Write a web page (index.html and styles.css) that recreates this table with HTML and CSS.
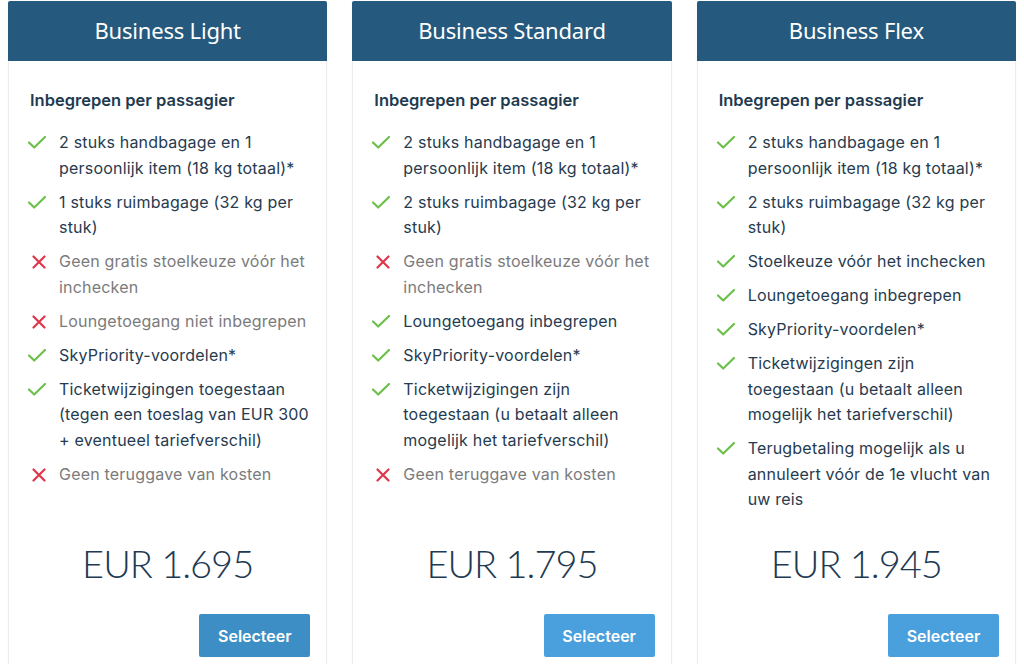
FILE: index.html
```html
<!DOCTYPE html>
<html lang="nl">
<head>
<meta charset="utf-8">
<title>Business tarieven</title>
<link rel="stylesheet" href="styles.css">
</head>
<body>
<svg width="0" height="0" class="defs" aria-hidden="true">
  <defs>
    <symbol id="ok" viewBox="0 0 18 13"><path d="M1 6.5 L6.2 11.5 L17 1" fill="none" stroke="currentColor" stroke-width="2.2" stroke-linecap="round" stroke-linejoin="round"/></symbol>
    <symbol id="no" viewBox="0 0 14 14"><path d="M1.5 1.5 L12.5 12.5 M12.5 1.5 L1.5 12.5" fill="none" stroke="currentColor" stroke-width="2.2" stroke-linecap="round"/></symbol>
  </defs>
</svg>
<main class="plans">
  <section class="card">
    <h2 class="card-title">Business Light</h2>
    <div class="card-body">
      <h3 class="incl">Inbegrepen per passagier</h3>
      <ul class="features">
        <li class="yes"><svg class="ico"><use href="#ok"/></svg><span>2 stuks handbagage en 1 persoonlijk item (18 kg totaal)*</span></li>
        <li class="yes"><svg class="ico"><use href="#ok"/></svg><span>1 stuks ruimbagage (32 kg per stuk)</span></li>
        <li class="no"><svg class="ico x"><use href="#no"/></svg><span>Geen gratis stoelkeuze vóór het inchecken</span></li>
        <li class="no"><svg class="ico x"><use href="#no"/></svg><span>Loungetoegang niet inbegrepen</span></li>
        <li class="yes"><svg class="ico"><use href="#ok"/></svg><span>SkyPriority-voordelen*</span></li>
        <li class="yes"><svg class="ico"><use href="#ok"/></svg><span>Ticketwijzigingen toegestaan (tegen een toeslag van EUR 300 + eventueel tariefverschil)</span></li>
        <li class="no"><svg class="ico x"><use href="#no"/></svg><span>Geen teruggave van kosten</span></li>
      </ul>
      <p class="price">EUR 1.695</p>
      <div class="actions"><button class="select dark">Selecteer</button></div>
    </div>
  </section>
  <section class="card">
    <h2 class="card-title">Business Standard</h2>
    <div class="card-body">
      <h3 class="incl">Inbegrepen per passagier</h3>
      <ul class="features">
        <li class="yes"><svg class="ico"><use href="#ok"/></svg><span>2 stuks handbagage en 1 persoonlijk item (18 kg totaal)*</span></li>
        <li class="yes"><svg class="ico"><use href="#ok"/></svg><span>2 stuks ruimbagage (32 kg per stuk)</span></li>
        <li class="no"><svg class="ico x"><use href="#no"/></svg><span>Geen gratis stoelkeuze vóór het inchecken</span></li>
        <li class="yes"><svg class="ico"><use href="#ok"/></svg><span>Loungetoegang inbegrepen</span></li>
        <li class="yes"><svg class="ico"><use href="#ok"/></svg><span>SkyPriority-voordelen*</span></li>
        <li class="yes"><svg class="ico"><use href="#ok"/></svg><span>Ticketwijzigingen zijn toegestaan (u betaalt alleen mogelijk het tariefverschil)</span></li>
        <li class="no"><svg class="ico x"><use href="#no"/></svg><span>Geen teruggave van kosten</span></li>
      </ul>
      <p class="price">EUR 1.795</p>
      <div class="actions"><button class="select">Selecteer</button></div>
    </div>
  </section>
  <section class="card">
    <h2 class="card-title">Business Flex</h2>
    <div class="card-body">
      <h3 class="incl">Inbegrepen per passagier</h3>
      <ul class="features">
        <li class="yes"><svg class="ico"><use href="#ok"/></svg><span>2 stuks handbagage en 1 persoonlijk item (18 kg totaal)*</span></li>
        <li class="yes"><svg class="ico"><use href="#ok"/></svg><span>2 stuks ruimbagage (32 kg per stuk)</span></li>
        <li class="yes"><svg class="ico"><use href="#ok"/></svg><span>Stoelkeuze vóór het inchecken</span></li>
        <li class="yes"><svg class="ico"><use href="#ok"/></svg><span>Loungetoegang inbegrepen</span></li>
        <li class="yes"><svg class="ico"><use href="#ok"/></svg><span>SkyPriority-voordelen*</span></li>
        <li class="yes"><svg class="ico"><use href="#ok"/></svg><span>Ticketwijzigingen zijn toegestaan (u betaalt alleen mogelijk het tariefverschil)</span></li>
        <li class="yes"><svg class="ico"><use href="#ok"/></svg><span>Terugbetaling mogelijk als u annuleert vóór de 1e vlucht van uw reis</span></li>
      </ul>
      <p class="price">EUR 1.945</p>
      <div class="actions"><button class="select">Selecteer</button></div>
    </div>
  </section>
</main>
</body>
</html>
```

FILE: styles.css
```css
html, body {
  margin: 0;
  padding: 0;
  background: #ffffff;
  overflow: hidden;
}
body {
  font-family: Inter, "Noto Sans", "Liberation Sans", sans-serif;
  color: #263b4f;
}
.defs {
  position: absolute;
  width: 0;
  height: 0;
}
.plans {
  display: grid;
  grid-template-columns: repeat(3, 1fr);
  column-gap: 25px;
  padding: 1px 8px 0;
}
.card {
  display: flex;
  flex-direction: column;
  border: 1px solid #ececec;
  border-top: none;
  border-radius: 2px 2px 0 0;
  box-shadow: 0 0 2px rgba(0, 0, 0, 0.04);
  background: #fff;
}
.card-title {
  margin: 0 -1px;
  height: 60px;
  padding-bottom: 3px;
  box-sizing: border-box;
  display: flex;
  align-items: center;
  justify-content: center;
  background: #255a7e;
  color: #ffffff;
  font-family: "Noto Sans", "Open Sans", sans-serif;
  font-weight: 400;
  font-size: 22px;
  letter-spacing: -0.2px;
  border-radius: 2px 2px 0 0;
}
.card-body {
  flex: 1;
  display: flex;
  flex-direction: column;
  padding: 27px 14px 24px 21px;
}
.incl {
  margin: 0 0 18px;
  font-size: 16.5px;
  line-height: 24px;
  font-weight: 600;
  color: #223a50;
}
.features {
  list-style: none;
  margin: 0;
  padding: 0;
  flex: 1;
  display: flex;
  flex-direction: column;
  gap: 8.4px;
}
.features li {
  display: flex;
  align-items: flex-start;
  gap: 13px;
  font-size: 16px;
  letter-spacing: 0.2px;
  line-height: 25.6px;
}
.features li.yes { color: #263b4f; }
.features li.no { color: #7b7b7b; }
.ico {
  flex: none;
  width: 18px;
  height: 13px;
  margin-top: 6px;
  margin-left: -2px;
  color: #6cc04a;
}
.ico.x {
  width: 14px;
  height: 14px;
  margin-top: 6px;
  margin-left: 2px;
  color: #e0364a;
}
.price {
  margin: 27px 0 0;
  padding-right: 7px;
  text-align: center;
  font-family: Lato, "Noto Sans", sans-serif;
  font-weight: 300;
  font-size: 38px;
  letter-spacing: -1px;
  line-height: 46px;
  color: #1e3a52;
}
.actions {
  display: flex;
  justify-content: flex-end;
  margin: 28px 2px 0 0;
}
.select {
  width: 111px;
  height: 43px;
  border: none;
  border-radius: 2px;
  background: #4aa0dc;
  color: #ffffff;
  font-family: Inter, "Noto Sans", sans-serif;
  font-size: 16px;
  font-weight: 600;
  cursor: pointer;
}
.select.dark {
  background: #3d8ec4;
}
```
